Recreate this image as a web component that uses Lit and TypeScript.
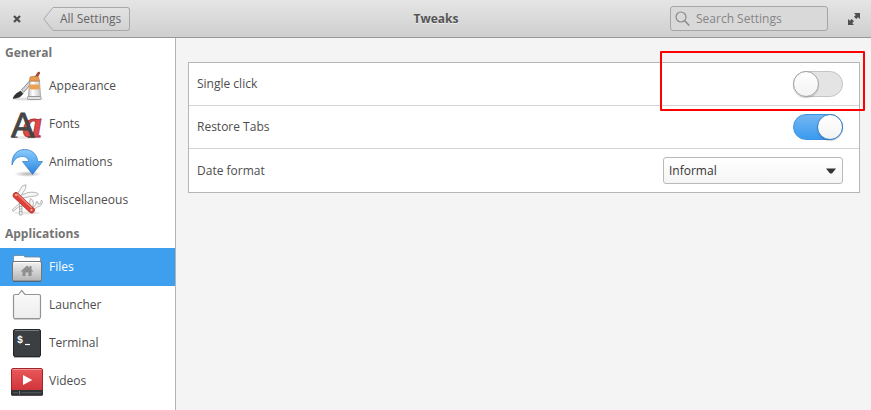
import { LitElement, html, svg, css, TemplateResult } from "lit";
import { customElement, property, state } from "lit/decorators.js";
import { classMap } from "lit/directives/class-map.js";

const icons: Record<string, TemplateResult> = {
  appearance: svg`
    <defs>
      <linearGradient id="tube" x1="0" x2="1"><stop offset="0" stop-color="#c4c4c4"/><stop offset=".35" stop-color="#fff"/><stop offset="1" stop-color="#c8c8c8"/></linearGradient>
    </defs>
    <ellipse cx="17" cy="29" rx="15" ry="1.6" fill="#000" opacity=".12"/>
    <path d="M22 10 27 2.200Q28.800 1.500 28.700 3.200L24.500 11z" fill="#b5482e" stroke="#7c2d1c" stroke-width=".6"/>
    <path d="m10.500 20 8-9 2.300 2-8 9.200z" fill="#d6d6d6" stroke="#777" stroke-width=".8"/>
    <path d="M2 28.500c1-2 1.500-3.500 3.500-5 1.200-1 3-1.500 4-2.500l2.500 2.500c-1 1.500-2 2.500-3.500 3.500-2 1-4.500 1-6.500 1.500z" fill="#333" stroke="#1c1c1c" stroke-width=".5"/>
    <path d="M18.500 11h10l1 15.500H17.500z" fill="url(#tube)" stroke="#9a9a9a" stroke-width=".8"/>
    <path d="M18.500 14.500h10l.2 4.500q-5 1-10.500 0z" fill="#eda253"/>
    <path d="M19 7q4.500-1.500 8.500 0l1 4h-10z" fill="#e89a50" stroke="#c07a40" stroke-width=".7"/>
    <rect x="16.500" y="26.500" width="13.500" height="3" rx=".8" fill="#e2e2e2" stroke="#8c8c8c" stroke-width=".8"/>`,
  fonts: svg`
    <ellipse cx="16" cy="29.500" rx="15" ry="1.500" fill="#000" opacity=".1"/>
    <text x="12" y="29" font-family="Liberation Serif, serif" font-size="38" font-weight="700" font-style="italic" fill="#de4a4c" stroke="#b02c32" stroke-width=".8">a</text>
    <text x="0" y="29" font-family="Liberation Sans, sans-serif" font-size="35" fill="#454545" stroke="#454545" stroke-width=".8">A</text>
    <path d="M1 29.200h5.500M17 29.200h6.500" stroke="#454545" stroke-width="1.200"/>`,
  animations: svg`
    <defs>
      <linearGradient id="arrow" x1="0" y1="0" x2="0" y2="1"><stop offset="0" stop-color="#8ccbfb"/><stop offset=".5" stop-color="#57aaf0"/><stop offset="1" stop-color="#2f80d8"/></linearGradient>
      <radialGradient id="arrowShade"><stop offset="0" stop-color="#000" stop-opacity=".3"/><stop offset="1" stop-color="#000" stop-opacity="0"/></radialGradient>
    </defs>
    <ellipse cx="17" cy="28" rx="14" ry="3" fill="url(#arrowShade)"/>
    <path d="M1 19C.5 9 6 3.500 13.500 3.500S26.500 8.500 26.500 15.500H31.500L21.500 28.500 11.500 15.500H17.500C17.500 12.500 15 10.500 11.500 10.500 6.500 10.500 3 13 1 19z" fill="url(#arrow)" stroke="#3a82cc" stroke-width=".8" stroke-linejoin="round"/>`,
  misc: svg`
    <ellipse cx="16" cy="29" rx="13" ry="1.500" fill="#000" opacity=".1"/>
    <g fill="#f6f6f6" stroke="#a4a4a4" stroke-width=".8" stroke-linejoin="round">
      <path d="M6.500 9.500 11.500 1.800 15 .8 14.500 4.500 10 12z"/>
      <path d="M9.500 11.500 17 8.500q8-1 10.500 1.500-1.500 2.500-8 2.500l-8 1.500z"/>
      <path d="M19 23q-1-5 .5-8.500 3 1 3 5l-1 4z"/>
      <path d="m22.500 25.500 4-2.500q4-1 5-4.500l-1-2.500-1 3.500-2.500.5-.5-2.500-1.500.5v2.500L21.500 23.500z"/>
      <path d="m10 18-8.500 7.500.5 2L11 20z"/>
      <path d="M8.500 19v12h2.500V20z"/>
    </g>
    <path d="M8.500 22.500H11M8.500 25H11M8.500 27.500H11" stroke="#999" stroke-width=".8"/>
    <path d="m5 11.500 15.500 14.500" stroke="#a8332c" stroke-width="6.500" stroke-linecap="round"/>
    <path d="m5 11.500 15.500 14.500" stroke="#dc423a" stroke-width="5.400" stroke-linecap="round"/>
    <path d="m6.500 10.500 14 13" stroke="#f0857c" stroke-width="1.400" stroke-linecap="round"/>
    <circle cx="5" cy="11" r="1" fill="#fbd5a0"/>
    <circle cx="20.500" cy="26" r="1" fill="#f5c8a0"/>`,
  files: svg`
    <defs>
      <linearGradient id="folder" x1="0" y1="0" x2="0" y2="1"><stop offset="0" stop-color="#f2f2f2"/><stop offset="1" stop-color="#b4b4b4"/></linearGradient>
    </defs>
    <path d="M2.500 13V6q0-1.500 1.500-1.500h8.500q1 0 1.300 1.500H28q1.500 0 1.500 1.500V13z" fill="#fdfdfd" stroke="#6f8598" stroke-width=".8"/>
    <rect x="1.500" y="10.500" width="29" height="19.500" rx="1.500" fill="url(#folder)" stroke="#747474"/>
    <path d="M3 11.500h26" stroke="#fff"/>
    <path d="M2 30.500h28" stroke="#3d4b58" stroke-opacity=".5"/>
    <path d="m16 14.500 2.500 2.200V15h2v3.500L22.500 20.500H20.500V25h-3v-3.500h-3V25h-3v-4.500H9.500z" fill="#8e8e8e"/>`,
  launcher: svg`
    <defs>
      <linearGradient id="sheet" x1="0" y1="0" x2="0" y2="1"><stop offset="0" stop-color="#fbfbfb"/><stop offset="1" stop-color="#ededed"/></linearGradient>
    </defs>
    <path d="M3 30.500h26" stroke="#000" stroke-opacity=".2"/>
    <path d="M4 5.500h3.500L10.700 1.500 14 5.500h14q1.500 0 1.500 1.500v21q0 1.500-1.500 1.500H4q-1.500 0-1.500-1.500V7q0-1.500 1.500-1.500z" fill="url(#sheet)" stroke="#949494" stroke-width="1.200"/>`,
  terminal: svg`
    <path d="M3 30.500h26" stroke="#000" stroke-opacity=".3"/>
    <rect x="2.500" y="2.500" width="27" height="27" rx="1.500" fill="#3b3f41" stroke="#232628"/>
    <path d="M4 3.500h24" stroke="#777c7e"/>
    <text x="6" y="16" font-family="Liberation Mono, monospace" font-size="10" font-weight="700" fill="#fff">$</text>
    <path d="M14 17.500h5" stroke="#fff" stroke-width="1.200"/>`,
  videos: svg`
    <defs>
      <linearGradient id="film" x1="0" y1="0" x2="0" y2="1"><stop offset="0" stop-color="#e9595a"/><stop offset="1" stop-color="#cb2c34"/></linearGradient>
    </defs>
    <rect x=".5" y="3.500" width="31" height="26.500" rx="1.500" fill="url(#film)" stroke="#a3242b"/>
    <path d="M1.500 4.500h29" stroke="#f29293"/>
    <path d="M0 25h32v4.500q0 1.200-1.200 1.200H1.200Q0 30.700 0 29.500z" fill="#2f3436"/>
    <path d="M2 27.700h5M10 27.700h20" stroke="#555b5e"/>
    <path d="M8.500 26v3.500" stroke="#7a7f82"/>
    <path d="m12 10 9.300 5L12 20z" fill="#fff"/>`,
};

interface Item {
  label: string;
  icon: string;
}

const groups: { title: string; items: Item[] }[] = [
  {
    title: "General",
    items: [
      { label: "Appearance", icon: "appearance" },
      { label: "Fonts", icon: "fonts" },
      { label: "Animations", icon: "animations" },
      { label: "Miscellaneous", icon: "misc" },
    ],
  },
  {
    title: "Applications",
    items: [
      { label: "Files", icon: "files" },
      { label: "Launcher", icon: "launcher" },
      { label: "Terminal", icon: "terminal" },
      { label: "Videos", icon: "videos" },
    ],
  },
];

@customElement("header-bar")
export class HeaderBar extends LitElement {
  static styles = css`
    :host {
      display: grid;
      grid-template-columns: 1fr auto 1fr;
      align-items: center;
      box-sizing: border-box;
      height: 38px;
      padding: 0 11px 0 12px;
      background: linear-gradient(#e5e5e5, #cfcfcf);
      border-bottom: 1px solid #989898;
    }
    button {
      display: flex;
      padding: 0;
      border: 0;
      background: none;
      font: inherit;
      color: inherit;
    }
    .side {
      display: flex;
      align-items: center;
    }
    .left {
      gap: 21px;
    }
    .right {
      justify-content: flex-end;
      gap: 20px;
    }
    .back-label {
      box-sizing: border-box;
      height: 24px;
      padding: 0 8px 0 6px;
      border: 1px solid #a8a8a8;
      border-left: 0;
      border-radius: 0 3px 3px 0;
      background: linear-gradient(#e2e2e2, #d2d2d2);
      line-height: 22px;
      color: #666;
    }
    .title {
      margin: 0;
      font-size: 12px;
      font-weight: 700;
      color: #555;
      text-shadow: 0 1px #eee;
    }
    .search {
      display: flex;
      align-items: center;
      gap: 6px;
      box-sizing: border-box;
      width: 158px;
      height: 25px;
      padding: 0 4px;
      border: 1px solid #a6a6a6;
      border-radius: 3px;
      background: #d9d9d9;
    }
    .search svg {
      flex: none;
    }
    input {
      flex: 1;
      min-width: 0;
      padding: 0;
      border: 0;
      outline: 0;
      background: none;
      font: inherit;
      color: #444;
    }
    input::placeholder {
      color: #858585;
      opacity: 1;
    }
  `;

  render() {
    return html`
      <div class="side left">
        <button aria-label="Close">
          <svg width="10" height="10" viewBox="0 0 10 10">
            <path d="m2 2 6 6M8 2 2 8" stroke="#4d4d4d" stroke-width="2.200" />
          </svg>
        </button>
        <button>
          <svg width="11" height="24" viewBox="0 0 11 24">
            <defs>
              <linearGradient id="point" x1="0" y1="0" x2="0" y2="1">
                <stop offset="0" stop-color="#e2e2e2" />
                <stop offset="1" stop-color="#d2d2d2" />
              </linearGradient>
            </defs>
            <path d="M11 .5h-1L.8 12 10 23.500h1" fill="url(#point)" stroke="#a8a8a8" />
          </svg>
          <span class="back-label">All Settings</span>
        </button>
      </div>
      <h1 class="title">Tweaks</h1>
      <div class="side right">
        <label class="search">
          <svg width="15" height="16" viewBox="0 0 15 16" fill="none" stroke="#8a8a8a">
            <circle cx="6" cy="6" r="5" stroke-width="1.200" />
            <path d="m9.500 9.500 4.700 5" stroke-width="1.600" />
          </svg>
          <input type="text" placeholder="Search Settings" aria-label="Search Settings" />
        </label>
        <button aria-label="Maximize">
          <svg width="12" height="12" viewBox="0 0 12 12" fill="#505050">
            <path d="M6 0h6v6L10 4.200 8.300 6 6 3.700 7.800 2zM0 12V6l2 1.800L3.700 6 6 8.300 4.200 10 6 12z" />
          </svg>
        </button>
      </div>
    `;
  }
}

@customElement("side-list")
export class SideList extends LitElement {
  @state() private selected = "Files";

  static styles = css`
    :host {
      display: block;
      background: #fff;
      border-right: 1px solid #b4b4b4;
    }
    .heading {
      margin: 0;
      padding-left: 5px;
      font-size: 12px;
      font-weight: 700;
      line-height: 29px;
      color: #747474;
    }
    .list {
      margin: 0;
      padding: 0;
      list-style: none;
    }
    .item {
      display: flex;
      align-items: center;
      gap: 6px;
      height: 38px;
      padding-left: 11px;
      color: #4d4d4d;
      text-decoration: none;
    }
    .item svg {
      flex: none;
      overflow: visible;
    }
    .item.active {
      background: #3e9fef;
      color: #fff;
    }
  `;

  private pick(event: Event, label: string) {
    event.preventDefault();
    this.selected = label;
  }

  render() {
    return html`<nav>
      ${groups.map(
        (group) => html`
          <h2 class="heading">${group.title}</h2>
          <ul class="list">
            ${group.items.map(
              (item) => html`<li>
                <a
                  href="#"
                  class=${classMap({ item: true, active: item.label === this.selected })}
                  @click=${(e: Event) => this.pick(e, item.label)}
                >
                  <svg width="32" height="32" viewBox="0 0 32 32" aria-hidden="true">${icons[item.icon]}</svg>
                  <span>${item.label}</span>
                </a>
              </li>`
            )}
          </ul>
        `
      )}
    </nav>`;
  }
}

@customElement("settings-panel")
export class SettingsPanel extends LitElement {
  @property({ type: Boolean }) restoreTabs = true;

  static styles = css`
    :host {
      display: block;
      background: #fff;
      border: 1px solid #b6b6b6;
    }
    .row {
      position: relative;
      display: flex;
      align-items: center;
      justify-content: space-between;
      height: 42px;
      padding: 0 16px 0 8px;
    }
    .row + .row {
      border-top: 1px solid #d4d4d4;
    }
    .row:last-child {
      height: 43px;
    }
    .switch {
      appearance: none;
      display: flex;
      box-sizing: border-box;
      width: 50px;
      height: 26px;
      margin: 0;
      border: 1px solid #c4c4c4;
      border-radius: 13px;
      background: #e4e4e4;
    }
    .switch::before {
      content: "";
      box-sizing: border-box;
      width: 26px;
      height: 26px;
      margin: -1px;
      border: 1px solid #a4a4a4;
      border-radius: 50%;
      background: linear-gradient(#fff, #f3f3f3);
      box-shadow: 0 1px 1px rgba(0, 0, 0, 0.2);
    }
    .switch:checked {
      justify-content: flex-end;
      border-color: #3f92e2;
      background: linear-gradient(#74b6f3, #3a9bee);
    }
    .switch:checked::before {
      border-color: #3a80c4;
    }
    .picker {
      display: grid;
      align-items: center;
      width: 180px;
    }
    .picker > * {
      grid-area: 1 / 1;
    }
    .picker svg {
      justify-self: end;
      margin-right: 7px;
      pointer-events: none;
    }
    select {
      appearance: none;
      box-sizing: border-box;
      width: 100%;
      height: 27px;
      padding: 0 5px;
      border: 1px solid #b9b9b9;
      border-radius: 3px;
      background: linear-gradient(#fff, #f5f5f5);
      font: inherit;
      color: #333;
    }
    .highlight {
      position: absolute;
      top: -12px;
      right: -6px;
      bottom: -6px;
      box-sizing: border-box;
      width: 205px;
      border: 2px solid #f00;
      border-radius: 1px;
      pointer-events: none;
      z-index: 1;
    }
  `;

  render() {
    return html`
      <div class="row">
        <label for="single">Single click</label>
        <input id="single" class="switch" type="checkbox" role="switch" />
        <div class="highlight"></div>
      </div>
      <div class="row">
        <label for="tabs">Restore Tabs</label>
        <input id="tabs" class="switch" type="checkbox" role="switch" ?checked=${this.restoreTabs} />
      </div>
      <div class="row">
        <label for="date">Date format</label>
        <div class="picker">
          <select id="date">
            <option>Informal</option>
          </select>
          <svg width="10" height="6" viewBox="0 0 10 6"><path d="M0 .5h10L6 5.500H4z" fill="#333" /></svg>
        </div>
      </div>
    `;
  }
}

@customElement("app-root")
export class AppRoot extends LitElement {
  static styles = css`
    :host {
      display: flex;
      flex-direction: column;
      min-height: 100vh;
      background: #f4f4f4;
      font: 12px/18px "Open Sans", "Noto Sans", sans-serif;
      color: #4d4d4d;
    }
    .body {
      display: grid;
      flex: 1;
      grid-template-columns: 176px 1fr;
    }
    .content {
      padding: 24px 11px 24px 12px;
    }
  `;

  render() {
    return html`
      <header-bar></header-bar>
      <div class="body">
        <side-list></side-list>
        <main class="content"><settings-panel></settings-panel></main>
      </div>
    `;
  }
}
